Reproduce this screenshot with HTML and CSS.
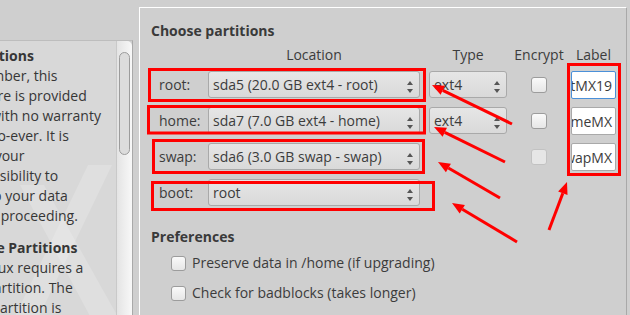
FILE: index.html
```html
<!DOCTYPE html>
<html lang="en">
<head>
    <meta charset="UTF-8">
    <title>Choose partitions</title>
    <link rel="stylesheet" href="styles.css">
</head>
<body>
<div class="window">
    <aside class="help">
        <div class="help-text">
            <svg class="watermark" width="117" height="170" viewBox="0 0 117 170">
                <polygon points="88,0 112,0 30,170 6,170" fill="#ffffff" opacity="0.18"/>
                <polygon points="20,20 44,20 117,150 117,185 100,170" fill="#ffffff" opacity="0.18"/>
            </svg>
            <p><b>Limitations</b><br>Remember, this<br>software is provided<br>AS-IS with no warranty<br>what-so-ever. It is<br>solely your<br>responsibility to<br>backup your data<br>before proceeding.</p>
            <p><b>Choose Partitions</b><br>MX Linux requires a<br>root partition. The<br>swap partition is<br>optional.</p>
        </div>
        <div class="scrollbar"><div class="thumb"></div></div>
    </aside>

    <section class="frame">
        <h2>Choose partitions</h2>
        <div class="parts">
            <div></div>
            <div class="head">Location</div>
            <div class="head type-col">Type</div>
            <div class="head">Encrypt</div>
            <div class="head">Label</div>

            <div class="name">root:</div>
            <div class="combo">sda5 (20.0 GB ext4 - root)<span class="spin"></span></div>
            <div class="type-col"><div class="combo">ext4<span class="spin"></span></div></div>
            <div class="enc"><span class="box"></span></div>
            <div class="entry focus"><span>rootMX19</span></div>

            <div class="name">home:</div>
            <div class="combo">sda7 (7.0 GB ext4 - home)<span class="spin"></span></div>
            <div class="type-col"><div class="combo">ext4<span class="spin"></span></div></div>
            <div class="enc"><span class="box"></span></div>
            <div class="entry"><span>homeMX</span></div>

            <div class="name">swap:</div>
            <div class="combo">sda6 (3.0 GB swap - swap)<span class="spin"></span></div>
            <div class="type-col"></div>
            <div class="enc"><span class="box off"></span></div>
            <div class="entry"><span>swapMX</span></div>

            <div class="name">boot:</div>
            <div class="combo">root<span class="spin"></span></div>
        </div>

        <h2 class="prefs">Preferences</h2>
        <label class="check"><span class="box"></span>Preserve data in /home (if upgrading)</label>
        <label class="check"><span class="box"></span>Check for badblocks (takes longer)</label>
    </section>

    <svg class="marks" width="630" height="315" viewBox="0 0 630 315">
        <g fill="none" stroke="#f00" stroke-width="3">
            <rect x="149.5" y="69.5" width="275" height="31"/>
            <rect x="148.5" y="106.5" width="276" height="26.5"/>
            <rect x="153.5" y="140.5" width="270" height="32"/>
            <rect x="152.5" y="182.5" width="281" height="27"/>
            <rect x="568.5" y="64.5" width="51" height="110"/>
            <line x1="512" y1="124" x2="442.8" y2="90.3"/>
            <line x1="505" y1="162" x2="444.8" y2="132.3"/>
            <line x1="500" y1="198" x2="448.4" y2="168"/>
            <line x1="517" y1="242" x2="462.3" y2="209.2"/>
            <line x1="549" y1="230" x2="562.8" y2="193.2"/>
        </g>
        <g fill="#f00">
            <polygon points="432,85 445,85.8 440.6,94.8"/>
            <polygon points="434,127 447,127.8 442.6,136.8"/>
            <polygon points="438,162 450.9,163.7 445.9,172.3"/>
            <polygon points="452,203 464.9,204.9 459.7,213.5"/>
            <polygon points="567,182 567.5,195 558.1,191.4"/>
        </g>
    </svg>
</div>
</body>
</html>
```

FILE: styles.css
```css
body {
    margin: 0;
    background: #cfcfcf;
    font-family: "Open Sans", "Noto Sans", sans-serif;
    font-size: 14px;
    color: #3c3c3c;
}
.window {
    position: relative;
    width: 630px;
    height: 315px;
    overflow: hidden;
    display: flex;
}

/* help pane on the left */
.help {
    width: 132px;
    height: 300px;
    margin-top: 40px;
    display: flex;
    border-top: 1px solid #bdbdbd;
    border-right: 1px solid #a9a9a9;
    flex-shrink: 0;
}
.help-text {
    position: relative;
    flex: 1;
    overflow: hidden;
    background: #d8d8d8;
    color: #363636;
}
.help-text p {
    position: relative;
    margin: 5px 0 12px -46px;
    line-height: 20px;
    white-space: nowrap;
}
.watermark {
    position: absolute;
    left: 0;
    top: 124px;
}
.scrollbar {
    width: 15px;
    background: linear-gradient(to right, #e4e4e4, #f8f8f8);
    border-left: 1px solid #c9c9c9;
    border-top-right-radius: 5px;
}
.thumb {
    margin: 11px 2px 0 2px;
    height: 101px;
    border: 1px solid #9c9c9c;
    border-radius: 6px;
    background: #dcdcdc;
}

/* partitions frame */
.frame {
    flex: 1;
    margin: 7px 3px 0 6px;
    padding: 13px 0 0 11px;
    border-top: 1px solid #fff;
    border-left: 1px solid #fff;
    border-right: 1px solid #a9a9a9;
}
h2 {
    margin: 0;
    font-size: 14px;
    font-weight: bold;
    line-height: 20px;
    color: #3a3a3a;
}
.parts {
    display: grid;
    grid-template-columns: 57px 212px 87px 64px 45px;
    grid-template-rows: 18px repeat(4, 27px);
    row-gap: 9px;
    margin-top: 3px;
}
.head {
    text-align: center;
    line-height: 18px;
    padding-top: 2px;
}
.type-col {
    padding-left: 9px;
}
.name {
    padding-left: 8px;
    line-height: 27px;
}
.combo {
    position: relative;
    height: 27px;
    box-sizing: border-box;
    padding: 0 20px 0 4px;
    line-height: 25px;
    border: 1px solid #a9a9a9;
    border-radius: 3px;
    background: linear-gradient(#e6e6e6, #d9d9d9);
    white-space: nowrap;
    overflow: hidden;
}
.spin {
    position: absolute;
    right: 6px;
    top: 9px;
    width: 0;
    height: 0;
    border-left: 3px solid transparent;
    border-right: 3px solid transparent;
    border-bottom: 4px solid #555;
}
.spin::after {
    content: "";
    position: absolute;
    left: -3px;
    top: 8px;
    border-left: 3px solid transparent;
    border-right: 3px solid transparent;
    border-top: 4px solid #555;
}
.enc {
    display: flex;
    align-items: center;
    justify-content: center;
}
.box {
    display: inline-block;
    width: 16px;
    height: 16px;
    box-sizing: border-box;
    border: 1px solid #9c9c9c;
    border-radius: 3px;
    background: linear-gradient(#fafafa, #e6e6e6);
}
.box.off {
    border-color: #c2c2c2;
    background: #e6e6e6;
}
.entry {
    height: 28px;
    box-sizing: border-box;
    padding: 0 3px;
    display: flex;
    justify-content: flex-end;
    align-items: center;
    overflow: hidden;
    white-space: nowrap;
    background: #fff;
    border: 1px solid #a9a9a9;
    border-radius: 2px;
}
.entry.focus {
    border-color: #4a90d9;
}
.prefs {
    margin-top: 21px;
}
.check {
    display: flex;
    align-items: center;
    gap: 6px;
    margin: 6px 0 0 20px;
    line-height: 20px;
}
.check + .check {
    margin-top: 10px;
}
.check .box {
    width: 15px;
    height: 15px;
}
.marks {
    position: absolute;
    top: 0;
    left: 0;
    pointer-events: none;
}
```
